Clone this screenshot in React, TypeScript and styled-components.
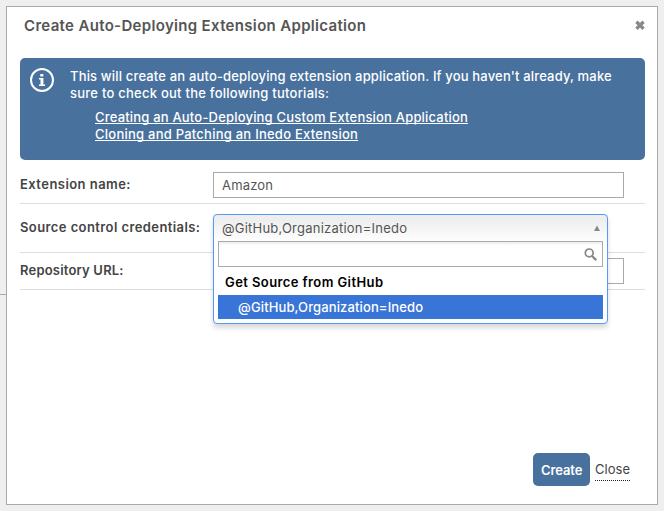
import React from "react";
import styled, { createGlobalStyle } from "styled-components";

const GlobalStyle = createGlobalStyle`
  *, *::before, *::after { box-sizing: border-box; }
  body {
    margin: 0;
    background: #efefef;
    font-family: Inter, "Liberation Sans", sans-serif;
    font-size: 13px;
    color: #444;
  }
`;

const Page = styled.div`
  display: flex;
  align-items: flex-start;
  height: 511px;
  overflow: hidden;
`;

const PageRule = styled.div`
  width: 6px;
  height: 1px;
  margin-top: 294px;
  background: #9aabb9;
`;

const Dialog = styled.section`
  display: flex;
  flex-direction: column;
  width: 652px;
  height: 499px;
  margin-top: 6px;
  padding: 0 12px 0 13px;
  border: 1px solid #a9a9a9;
  background: #fff;
`;

const TitleBar = styled.header`
  display: flex;
  justify-content: space-between;
  height: 51px;
  padding: 9px 0 0 4px;
`;

const Title = styled.h1`
  height: 18px;
  margin: 0;
  overflow: hidden;
  font-size: 15px;
  line-height: 20px;
  font-weight: 600;
  letter-spacing: 0.328px;
  color: #555;
  white-space: nowrap;
`;

const IconButton = styled.button`
  display: flex;
  width: 10px;
  height: 10px;
  margin-top: 4px;
  padding: 0;
  border: 0;
  background: none;
`;

const Banner = styled.div`
  display: flex;
  gap: 16px;
  height: 102px;
  padding: 10px;
  border-radius: 5px;
  background: #48719e;
  color: #fff;
  font-weight: 500;
  line-height: 17px;
  white-space: nowrap;
`;

const BannerText = styled.p`
  margin: 0;
`;

const TextLine = styled.span<{ $tracking: number }>`
  display: block;
  letter-spacing: ${(p) => p.$tracking}px;
`;

const Tutorials = styled.ul`
  margin: 7px 0 0;
  padding: 0 0 0 25px;
  list-style: none;
`;

const TutorialItem = styled.li`
  height: 17px;
`;

const TutorialLink = styled.a<{ $tracking: number }>`
  color: #fff;
  letter-spacing: ${(p) => p.$tracking}px;
  text-decoration: underline;
  text-decoration-skip-ink: none;
  text-decoration-thickness: 1px;
  text-underline-offset: 1px;
`;

const Form = styled.form`
  display: flex;
  flex-direction: column;
  margin-top: 7px;
`;

const Row = styled.div<{ $height: number }>`
  display: grid;
  grid-template-columns: 193px 411px;
  height: ${(p) => p.$height}px;
  align-items: center;
  border-bottom: 1px solid #ddd;
`;

const Label = styled.label<{ $tracking: number }>`
  padding-bottom: 2px;
  font-weight: 600;
  letter-spacing: ${(p) => p.$tracking}px;
  white-space: nowrap;
`;

const TextInput = styled.input`
  width: 411px;
  height: 26px;
  padding: 0 8px;
  border: 1px solid #a9a9a9;
  outline: 0;
  background: #fff;
  font: inherit;
  letter-spacing: 0.176px;
  color: #555;
`;

const SelectBox = styled.div`
  position: relative;
  align-self: start;
  width: 395px;
  height: 27px;
  margin-top: 10px;
`;

const SelectPopup = styled.div`
  position: absolute;
  top: 0;
  left: 0;
  z-index: 1;
  width: 395px;
  height: 110px;
  padding: 0 4px 4px;
  border: 1px solid #5897fb;
  border-radius: 4px;
  background: #fff linear-gradient(#eee 20%, #fff 100%) 0 0 / 100% 27px no-repeat;
  box-shadow: 0 4px 5px rgba(0, 0, 0, 0.15);
`;

const SelectValue = styled.div`
  display: flex;
  align-items: center;
  justify-content: space-between;
  height: 26px;
  padding: 0 3px 1px 4px;
  color: #555;
  letter-spacing: 0.227px;
`;

const SearchField = styled.div`
  display: flex;
  align-items: center;
  justify-content: flex-end;
  height: 26px;
  padding-right: 5px;
  border: 1px solid #aaa;
  background: linear-gradient(#eee 1%, #fff 15%);
`;

const GroupName = styled.div`
  height: 28px;
  padding: 2px 0 0 7px;
  color: #000;
  font-weight: 600;
  line-height: 27px;
  letter-spacing: 0.411px;
`;

const Option = styled.div`
  height: 24px;
  padding-left: 20px;
  background: #3875d7;
  color: #fff;
  font-weight: 500;
  line-height: 24px;
  letter-spacing: 0.121px;
`;

const Footer = styled.footer`
  display: flex;
  justify-content: flex-end;
  align-items: flex-start;
  gap: 5px;
  margin-top: auto;
  padding: 0 15px 18px 0;
`;

const CreateButton = styled.button`
  width: 57px;
  height: 33px;
  padding: 0;
  border: 0;
  border-radius: 5px;
  background: #48719e;
  color: #fff;
  font: inherit;
  font-weight: 600;
  letter-spacing: -0.076px;
`;

const CloseLink = styled.a`
  height: 28px;
  border-bottom: 1px dotted #222;
  line-height: 33px;
`;

const CloseIcon = () => (
  <svg width="10" height="10" viewBox="0 0 10 10">
    <path d="M1.4 1.8 8.6 8.8M8.6 1.8 1.4 8.8" stroke="#888" strokeWidth="3.3" />
  </svg>
);

const InfoIcon = () => (
  <svg width="24" height="24" viewBox="0 0 24 24">
    <circle cx="12" cy="12" r="11" fill="none" stroke="#fff" strokeWidth="2" />
    <path d="M10.3 6h3v2.6h-3zM9 10h4.4v6.4H15V18H9v-1.6h1.5v-4.8H9z" fill="#fff" />
  </svg>
);

const SearchIcon = () => (
  <svg width="13" height="13" viewBox="0 0 13 13" fill="none" stroke="#888">
    <circle cx="5.2" cy="4.9" r="3.9" strokeWidth="1.7" />
    <path d="m8 8 4.2 4.2" strokeWidth="2.3" />
  </svg>
);

const ArrowUp = () => (
  <svg width="6" height="6" viewBox="0 0 6 6">
    <path d="M3 .5 6 6H0z" fill="#888" />
  </svg>
);

export default function App() {
  return (
    <Page>
      <GlobalStyle />
      <PageRule />
      <Dialog>
        <TitleBar>
          <Title>Create Auto-Deploying Extension Application</Title>
          <IconButton aria-label="Close dialog"><CloseIcon /></IconButton>
        </TitleBar>
        <Banner>
          <InfoIcon />
          <div>
            <BannerText>
              <TextLine $tracking={0.165}>
                This will create an auto-deploying extension application. If you haven't already, make
              </TextLine>
              <TextLine $tracking={0.245}>sure to check out the following tutorials:</TextLine>
            </BannerText>
            <Tutorials>
              <TutorialItem>
                <TutorialLink $tracking={0.19}>Creating an Auto-Deploying Custom Extension Application</TutorialLink>
              </TutorialItem>
              <TutorialItem>
                <TutorialLink $tracking={0.24}>Cloning and Patching an Inedo Extension</TutorialLink>
              </TutorialItem>
            </Tutorials>
          </div>
        </Banner>
        <Form>
          <Row $height={37}>
            <Label $tracking={0.448}>Extension name:</Label>
            <TextInput defaultValue="Amazon" />
          </Row>
          <Row $height={49}>
            <Label $tracking={0.413}>Source control credentials:</Label>
            <SelectBox>
              <SelectPopup>
                <SelectValue>
                  @GitHub,Organization=Inedo
                  <ArrowUp />
                </SelectValue>
                <SearchField><SearchIcon /></SearchField>
                <GroupName>Get Source from GitHub</GroupName>
                <Option>@GitHub,Organization=Inedo</Option>
              </SelectPopup>
            </SelectBox>
          </Row>
          <Row $height={37}>
            <Label $tracking={0.194}>Repository URL:</Label>
            <TextInput />
          </Row>
        </Form>
        <Footer>
          <CreateButton>Create</CreateButton>
          <CloseLink>Close</CloseLink>
        </Footer>
      </Dialog>
    </Page>
  );
}
